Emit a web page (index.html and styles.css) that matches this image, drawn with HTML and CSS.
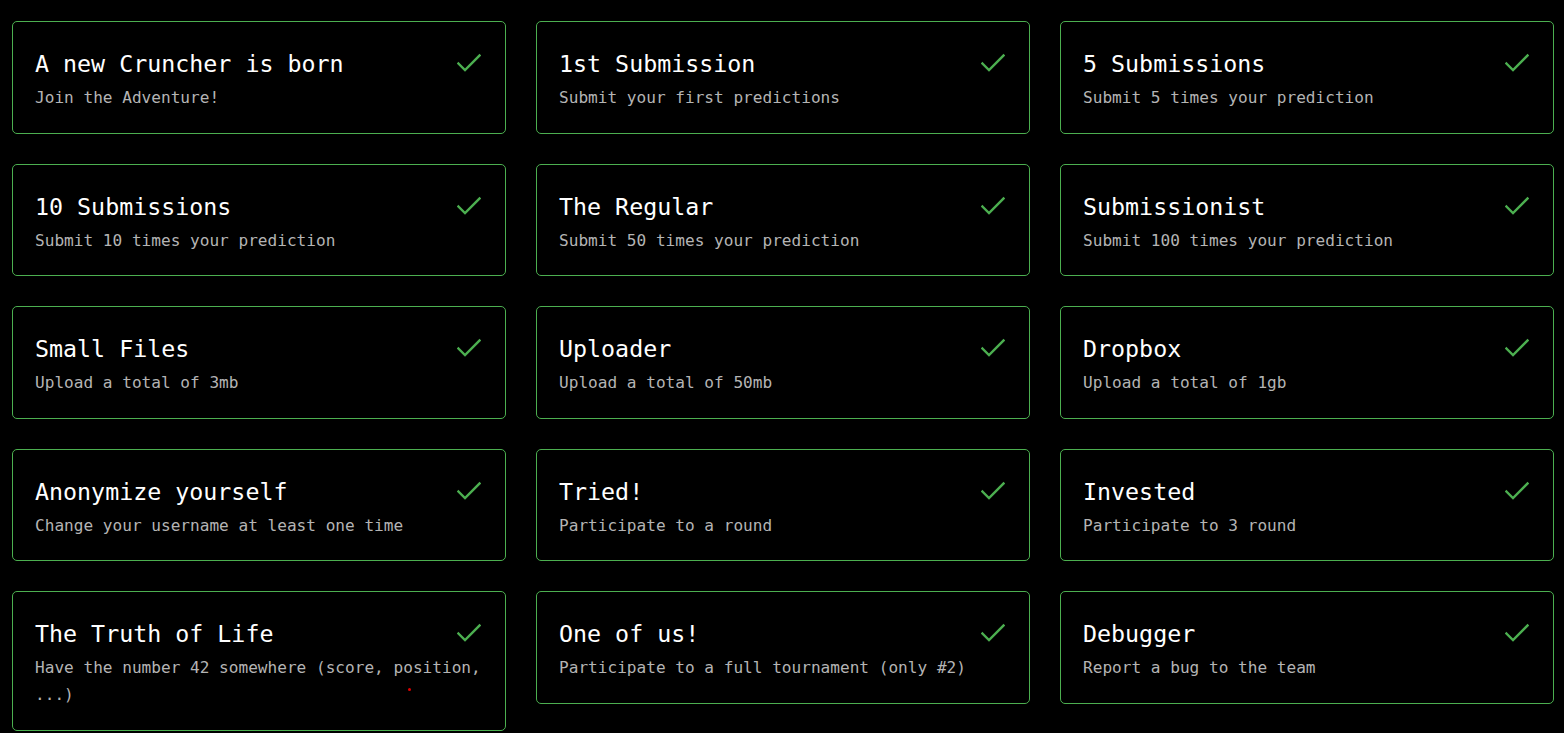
FILE: index.html
```html
<!DOCTYPE html>
<html lang="en">
<head>
<meta charset="utf-8">
<title>Achievements</title>
<link rel="stylesheet" href="styles.css">
</head>
<body>
<main class="achievements">
  <div class="card"><div class="card-head"><h3 class="title">A new Cruncher is born</h3><svg class="check" viewBox="0 0 24 20" width="24" height="20"><path d="M1.5 10.5 L8 17 L22.5 2.5"/></svg></div><p class="desc">Join the Adventure!</p></div>
  <div class="card"><div class="card-head"><h3 class="title">1st Submission</h3><svg class="check" viewBox="0 0 24 20" width="24" height="20"><path d="M1.5 10.5 L8 17 L22.5 2.5"/></svg></div><p class="desc">Submit your first predictions</p></div>
  <div class="card"><div class="card-head"><h3 class="title">5 Submissions</h3><svg class="check" viewBox="0 0 24 20" width="24" height="20"><path d="M1.5 10.5 L8 17 L22.5 2.5"/></svg></div><p class="desc">Submit 5 times your prediction</p></div>

  <div class="card"><div class="card-head"><h3 class="title">10 Submissions</h3><svg class="check" viewBox="0 0 24 20" width="24" height="20"><path d="M1.5 10.5 L8 17 L22.5 2.5"/></svg></div><p class="desc">Submit 10 times your prediction</p></div>
  <div class="card"><div class="card-head"><h3 class="title">The Regular</h3><svg class="check" viewBox="0 0 24 20" width="24" height="20"><path d="M1.5 10.5 L8 17 L22.5 2.5"/></svg></div><p class="desc">Submit 50 times your prediction</p></div>
  <div class="card"><div class="card-head"><h3 class="title">Submissionist</h3><svg class="check" viewBox="0 0 24 20" width="24" height="20"><path d="M1.5 10.5 L8 17 L22.5 2.5"/></svg></div><p class="desc">Submit 100 times your prediction</p></div>

  <div class="card"><div class="card-head"><h3 class="title">Small Files</h3><svg class="check" viewBox="0 0 24 20" width="24" height="20"><path d="M1.5 10.5 L8 17 L22.5 2.5"/></svg></div><p class="desc">Upload a total of 3mb</p></div>
  <div class="card"><div class="card-head"><h3 class="title">Uploader</h3><svg class="check" viewBox="0 0 24 20" width="24" height="20"><path d="M1.5 10.5 L8 17 L22.5 2.5"/></svg></div><p class="desc">Upload a total of 50mb</p></div>
  <div class="card"><div class="card-head"><h3 class="title">Dropbox</h3><svg class="check" viewBox="0 0 24 20" width="24" height="20"><path d="M1.5 10.5 L8 17 L22.5 2.5"/></svg></div><p class="desc">Upload a total of 1gb</p></div>

  <div class="card"><div class="card-head"><h3 class="title">Anonymize yourself</h3><svg class="check" viewBox="0 0 24 20" width="24" height="20"><path d="M1.5 10.5 L8 17 L22.5 2.5"/></svg></div><p class="desc">Change your username at least one time</p></div>
  <div class="card"><div class="card-head"><h3 class="title">Tried!</h3><svg class="check" viewBox="0 0 24 20" width="24" height="20"><path d="M1.5 10.5 L8 17 L22.5 2.5"/></svg></div><p class="desc">Participate to a round</p></div>
  <div class="card"><div class="card-head"><h3 class="title">Invested</h3><svg class="check" viewBox="0 0 24 20" width="24" height="20"><path d="M1.5 10.5 L8 17 L22.5 2.5"/></svg></div><p class="desc">Participate to 3 round</p></div>

  <div class="card"><div class="card-head"><h3 class="title">The Truth of Life</h3><svg class="check" viewBox="0 0 24 20" width="24" height="20"><path d="M1.5 10.5 L8 17 L22.5 2.5"/></svg></div><p class="desc">Have the number 42 somewhere (score, position, ...)</p><span class="stray-dot"></span></div>
  <div class="card"><div class="card-head"><h3 class="title">One of us!</h3><svg class="check" viewBox="0 0 24 20" width="24" height="20"><path d="M1.5 10.5 L8 17 L22.5 2.5"/></svg></div><p class="desc">Participate to a full tournament (only #2)</p></div>
  <div class="card"><div class="card-head"><h3 class="title">Debugger</h3><svg class="check" viewBox="0 0 24 20" width="24" height="20"><path d="M1.5 10.5 L8 17 L22.5 2.5"/></svg></div><p class="desc">Report a bug to the team</p></div>
</main>
</body>
</html>
```

FILE: styles.css
```css
html, body {
  margin: 0;
  padding: 0;
  background: #000;
}

body {
  font-family: "DejaVu Sans Mono", "Liberation Mono", monospace;
  color: #fff;
}

.achievements {
  display: grid;
  grid-template-columns: repeat(3, 494px);
  column-gap: 30px;
  row-gap: 30px;
  align-items: start;
  padding: 21px 10px 0 12px;
}

.card {
  position: relative;
  border: 1px solid #4caf50;
  border-radius: 5px;
  padding: 26px 22px 21.5px 22px;
  box-sizing: border-box;
  min-height: 112.5px;
}

.card-head {
  display: flex;
  justify-content: space-between;
  align-items: flex-start;
  margin-bottom: 4px;
}

.title {
  margin: 0;
  font-size: 23.3px;
  line-height: 32px;
  font-weight: normal;
  color: #fff;
}

.check {
  flex: none;
  margin-top: 5px;
  margin-right: 2px;
}

.check path {
  fill: none;
  stroke: #4caf50;
  stroke-width: 2.3;
  stroke-linecap: square;
  stroke-linejoin: miter;
}

.desc {
  margin: 0;
  font-size: 16.1px;
  line-height: 27px;
  color: #b4b4b4;
}

.stray-dot {
  position: absolute;
  left: 395px;
  top: 96px;
  width: 3px;
  height: 3px;
  border-radius: 50%;
  background: #e00000;
}
```
